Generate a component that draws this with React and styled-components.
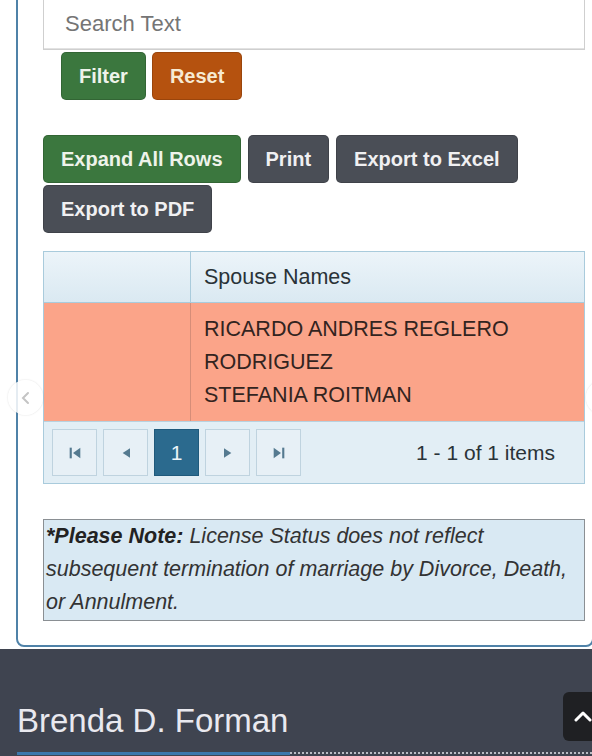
import React from "react";
import styled, {createGlobalStyle, css} from "styled-components";

const GlobalStyle = createGlobalStyle`
  html, body {
    margin: 0;
    padding: 0;
    background: #ffffff;
    overflow: hidden;
  }
  body {
    font-family: "Liberation Sans", Arial, sans-serif;
    color: #333;
  }
`

const Page = styled.div`
  position: relative;
  width: 592px;
  height: 756px;
  overflow: hidden;
`

const Card = styled.div`
  margin: -30px 0 0 16px;
  width: 578px;
  box-sizing: border-box;
  padding: 26px 7px 24px 25px;
  border: 2px solid #4f82a8;
  border-radius: 8px;
  background: #fff;
`

const SearchInput = styled.input`
  display: block;
  box-sizing: border-box;
  width: 542px;
  height: 52px;
  padding: 0 21px;
  border: 1px solid #cfcfcf;
  border-top: 0;
  box-shadow: inset 0 -1px 0 #e2e2e2;
  font-family: "Liberation Sans", Arial, sans-serif;
  font-size: 22px;
  color: #555;
  outline: none;

  ::placeholder {
    color: #9a9a9a;
  }
`

const FilterRow = styled.div`
  display: flex;
  gap: 6px;
  margin: 2px 0 0 18px;
`

const ActionRow = styled.div`
  display: flex;
  flex-wrap: wrap;
  column-gap: 7px;
  row-gap: 2px;
  margin-top: 35px;
`

const tones = {
  green: css`background: #3b773e; color: #eef3ea;`,
  orange: css`background: #b5520f; color: #f7ead3;`,
  dark: css`background: #4a4e56; color: #f0f0f2;`,
}

const Button = styled.button`
  ${p => tones[p.$tone]};
  height: 48px;
  padding: 0 17px;
  border: 1px solid rgba(0, 0, 0, 0.15);
  border-radius: 5px;
  font-family: "Liberation Sans", Arial, sans-serif;
  font-weight: bold;
  font-size: 20px;
  cursor: pointer;
`

const Grid = styled.div`
  margin-top: 18px;
  border: 1px solid #a9cbdc;
`

const Row = styled.div`
  display: grid;
  grid-template-columns: 146px 1fr;
`

const HeadCell = styled.div`
  height: 50px;
  display: flex;
  align-items: center;
  padding-left: 13px;
  font-size: 21.5px;
  color: #2a3338;
  background: linear-gradient(to bottom, #ecf4f9, #dae9f2);
  border-bottom: 1px solid #a9cbdc;
  & + & {
    border-left: 1px solid #a9cbdc;
  }
`

const BodyCell = styled.div`
  background: #fba489;
  padding: 10px 40px 9px 13px;
  font-size: 21.5px;
  line-height: 33px;
  color: #33241f;
  & + & {
    border-left: 1px solid #d68d78;
  }
`

const Pager = styled.div`
  display: flex;
  align-items: center;
  height: 61px;
  padding: 0 29px 0 8px;
  gap: 6px;
  background: #e2eef5;
  border-top: 1px solid #b7d2e0;
`

const PageButton = styled.div`
  box-sizing: border-box;
  width: 45px;
  height: 47px;
  display: flex;
  align-items: center;
  justify-content: center;
  border: 1px solid ${p => (p.$active ? "#1f5a7c" : "#bfd3df")};
  background: ${p => (p.$active ? "#2b6a8e" : "#e7f0f6")};
  color: ${p => (p.$active ? "#eaf3f8" : "#4d6f84")};
  font-size: 21px;
`

const ItemCount = styled.div`
  margin-left: auto;
  font-size: 21px;
  color: #2a3338;
`

const Note = styled.div`
  margin-top: 35px;
  padding: 0 2px 1px 2px;
  background: #d9e9f3;
  border: 1px solid #8a8f93;
  font-size: 21.5px;
  line-height: 33px;
  font-style: italic;
  color: #333;
  b {
    font-weight: bold;
    color: #222;
  }
`

const Footer = styled.footer`
  position: relative;
  margin-top: 2px;
  height: 120px;
  background: #3f4450;
  padding: 52px 0 0 17px;
  box-sizing: border-box;
`

const FooterName = styled.h2`
  margin: 0;
  font-weight: normal;
  font-size: 33px;
  line-height: 40px;
  color: #e9e9ef;
`

const FooterRule = styled.div`
  display: flex;
  margin-top: 11px;
  height: 3px;
`

const RuleBlue = styled.div`
  width: 273px;
  background: #3b78ad;
`

const RuleDots = styled.div`
  flex: 1;
  border-top: 2px dotted #b9bcc4;
`

const ToTop = styled.div`
  position: absolute;
  left: 563px;
  top: 43px;
  width: 48px;
  height: 49px;
  border-radius: 6px;
  background: #1f2023;
  display: flex;
  align-items: center;
  padding-left: 8px;
  box-sizing: border-box;
`

const CarouselArrow = styled.div`
  position: absolute;
  top: 380px;
  ${p => (p.$side === "left" ? "left: 8px;" : "left: 586px;")}
  width: 35px;
  height: 35px;
  border-radius: 50%;
  background: rgba(255, 255, 255, 0.85);
  box-shadow: 0 0 2px rgba(0, 0, 0, 0.15);
  display: flex;
  align-items: center;
  justify-content: center;
`

const PagerIcon = ({kind}) => {
    const shapes = {
        first: <><rect x="2" y="2" width="1.6" height="8" /><path d="M10 2 L4.5 6 L10 10 Z" /></>,
        prev: <path d="M9 2.5 L3.5 6 L9 9.5 Z" />,
        next: <path d="M3 2.5 L8.5 6 L3 9.5 Z" />,
        last: <><path d="M2 2 L7.5 6 L2 10 Z" /><rect x="8.4" y="2" width="1.6" height="8" /></>,
    }
    return <svg width="16" height="16" viewBox="0 0 12 12" fill="#557a90">{shapes[kind]}</svg>
}

export default function App() {
    return (<Page>
        <GlobalStyle/>
        <Card>
            <SearchInput placeholder="Search Text"/>
            <FilterRow>
                <Button $tone="green">Filter</Button>
                <Button $tone="orange">Reset</Button>
            </FilterRow>
            <ActionRow>
                <Button $tone="green">Expand All Rows</Button>
                <Button $tone="dark">Print</Button>
                <Button $tone="dark">Export to Excel</Button>
                <Button $tone="dark">Export to PDF</Button>
            </ActionRow>
            <Grid>
                <Row>
                    <HeadCell/>
                    <HeadCell>Spouse Names</HeadCell>
                </Row>
                <Row>
                    <BodyCell/>
                    <BodyCell>
                        RICARDO ANDRES REGLERO RODRIGUEZ<br/>
                        STEFANIA ROITMAN
                    </BodyCell>
                </Row>
                <Pager>
                    <PageButton><PagerIcon kind="first"/></PageButton>
                    <PageButton><PagerIcon kind="prev"/></PageButton>
                    <PageButton $active>1</PageButton>
                    <PageButton><PagerIcon kind="next"/></PageButton>
                    <PageButton><PagerIcon kind="last"/></PageButton>
                    <ItemCount>1 - 1 of 1 items</ItemCount>
                </Pager>
            </Grid>
            <Note>
                <b>*Please Note:</b> License Status does not reflect subsequent termination of marriage by Divorce, Death, or Annulment.
            </Note>
        </Card>
        <Footer>
            <FooterName>Brenda D. Forman</FooterName>
            <FooterRule>
                <RuleBlue/>
                <RuleDots/>
            </FooterRule>
            <ToTop>
                <svg width="24" height="24" viewBox="0 0 24 24" fill="none" stroke="#fff" strokeWidth="3" strokeLinecap="round" strokeLinejoin="round">
                    <path d="M5 15 L12 8 L19 15"/>
                </svg>
            </ToTop>
        </Footer>
        <CarouselArrow $side="left">
            <svg width="14" height="14" viewBox="0 0 14 14" fill="none" stroke="#c4c4c4" strokeWidth="2" strokeLinecap="round">
                <path d="M9 2 L4 7 L9 12"/>
            </svg>
        </CarouselArrow>
        <CarouselArrow $side="right"/>
    </Page>)
}
